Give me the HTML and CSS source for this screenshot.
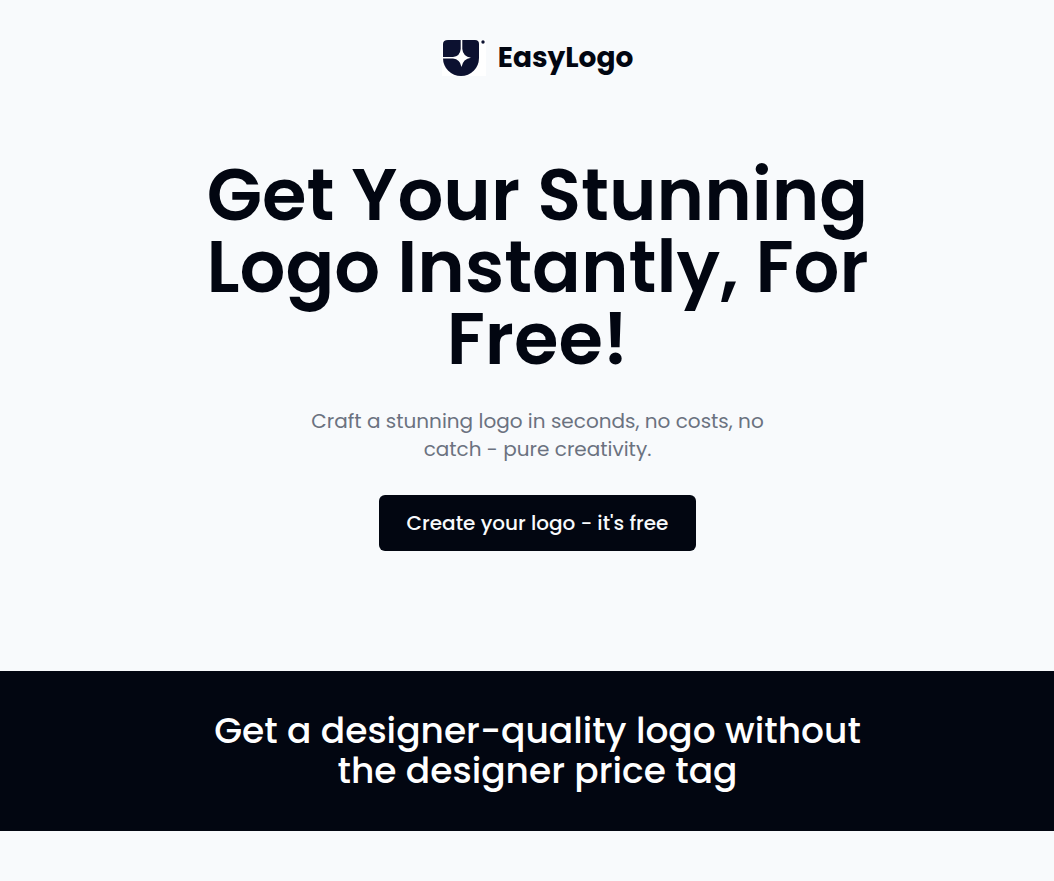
FILE: index.html
```html
<!DOCTYPE html>
<html lang="en">
<head>
<meta charset="utf-8">
<title>EasyLogo</title>
<meta name="viewport" content="width=device-width, initial-scale=1">
<link rel="stylesheet" href="styles.css">
</head>
<body>
<header class="header">
  <a class="brand" href="#">
    <svg class="brand-mark" viewBox="0 0 44 38" aria-hidden="true">
      <path fill="#fff" d="M0 1h44v36H0z"/>
      <path fill="#0c1130" d="M6 1H33Q37 1 37 5V19A18 18 0 0 1 1 19V5Q1 1 6 1Z"/>
      <path fill="#fff" d="M18.7 1h1.6v9q.6 7.500 8.700 8.700-8 1-9.500 9.300-1.500-8-8.500-8.500H1v-1.600h10q7-.4 7.700-7.900Z"/>
      <circle cx="41" cy="3" r="1.700" fill="#0c1130"/>
    </svg>
    <span>EasyLogo</span>
  </a>
</header>
<main>
  <section class="hero">
    <h1 class="hero-title">Get Your Stunning Logo Instantly, For Free!</h1>
    <p class="hero-text">Craft a stunning logo in seconds, no costs, no catch - pure creativity.</p>
    <button class="cta" type="button">Create your logo - it's free</button>
  </section>
  <section class="banner">
    <h2 class="banner-title">Get a designer-quality logo without the designer price tag</h2>
  </section>
</main>
</body>
</html>
```
FILE: styles.css
```css
* { box-sizing: border-box; }
body {
  margin: 0;
  padding-bottom: 50px;
  background: #f8fafc;
  color: #020611;
  font-family: Poppins, Inter, "Open Sans", sans-serif;
}
h1, h2, p { margin: 0; }
.header, .hero, .banner { padding-left: 21px; }
.header { display: flex; justify-content: center; padding-top: 37px; }
.brand {
  display: flex;
  align-items: center;
  gap: 12px;
  color: inherit;
  font-size: 28px;
  font-weight: 700;
  line-height: 42px;
  text-decoration: none;
}
.brand-mark { width: 44px; height: 38px; }
.hero {
  display: flex;
  flex-direction: column;
  align-items: center;
  padding-top: 80px;
  padding-bottom: 120px;
  text-align: center;
}
.hero-title { max-width: 700px; font-size: 72px; font-weight: 600; line-height: 72px; }
.hero-text { max-width: 480px; margin-top: 32px; color: #6b7280; font-size: 20px; line-height: 28px; }
.cta {
  margin-top: 32px;
  padding: 14px 28px;
  border: 0;
  border-radius: 6px;
  background: #020611;
  color: #f8fafc;
  font: 500 20px/28px Poppins, Inter, "Open Sans", sans-serif;
}
.banner {
  display: flex;
  justify-content: center;
  padding-top: 40px;
  padding-bottom: 40px;
  background: #020611;
  color: #fff;
  text-align: center;
}
.banner-title { max-width: 700px; font-size: 36px; font-weight: 500; line-height: 40px; }
```
